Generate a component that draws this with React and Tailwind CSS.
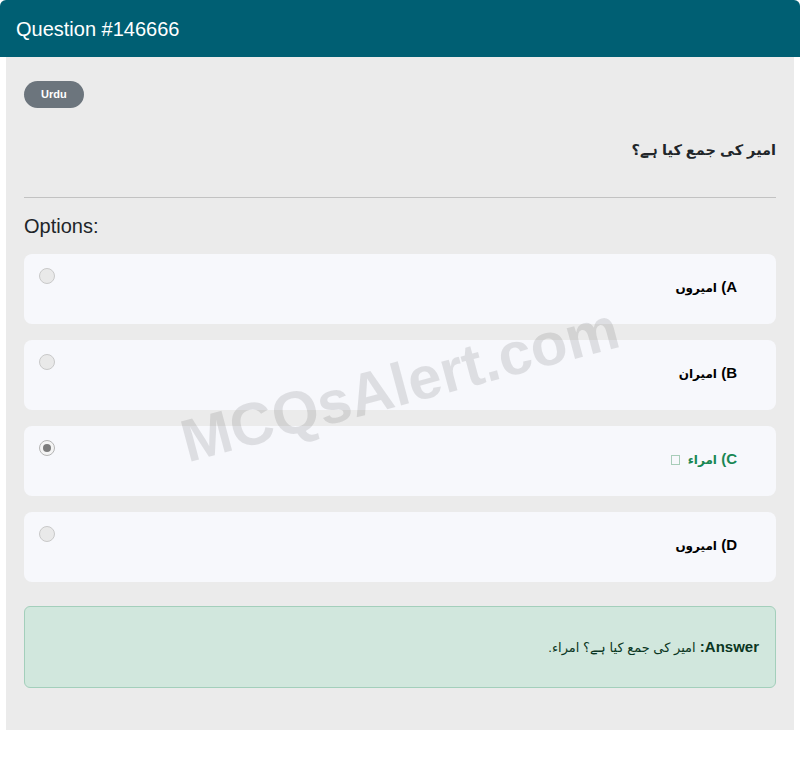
import React from "react";

const font = { fontFamily: '"Liberation Sans", Arial, "DejaVu Sans", sans-serif' };

function Radio({ checked }) {
  if (checked) {
    return (
      <span className="mt-[14px] ml-[15px] flex h-4 w-4 shrink-0 items-center justify-center self-start rounded-full border border-[#b5b5b5] bg-[#f4f4f4]">
        <span className="h-2 w-2 rounded-full bg-[#7c7c7c]" />
      </span>
    );
  }
  return (
    <span className="mt-[14px] ml-[15px] h-4 w-4 shrink-0 self-start rounded-full border border-[#c9c9c9] bg-[#e9e9e9]" />
  );
}

function Option({ letter, text, checked, correct }) {
  return (
    <div className="flex h-[70px] items-center rounded-lg bg-[#f7f8fc]">
      <Radio checked={checked} />
      <div
        dir="rtl"
        className={
          "flex-1 pr-[39px] pb-[3px] text-right text-[15px] font-bold " +
          (correct ? "text-[#198754]" : "text-black")
        }
      >
        {letter}) <span className="text-[12px]">{text}</span>
        {correct && (
          <span className="mr-[8px] inline-block h-[10px] w-[9px] border border-[#a8cdb9] align-middle" />
        )}
      </div>
    </div>
  );
}

export default function App() {
  return (
    <div className="min-h-[760px] w-[800px] bg-white" style={font}>
      <div className="flex h-[57px] items-center rounded-t-md bg-[#005f73] px-4 text-[20px] text-white">
        Question #146666
      </div>
      <div className="relative mx-[6px] bg-[#ebebeb] px-[18px] pt-[24px] pb-[42px]">
        <div className="flex">
          <span className="flex h-[27px] items-center rounded-full bg-[#6c757d] px-[17px] text-[11px] font-bold text-white">
            Urdu
          </span>
        </div>
        <div dir="rtl" className="mt-[28px] text-right text-[14.5px] leading-[28px] font-bold text-[#212529]">
          امیر کی جمع کیا ہے؟
        </div>
        <div className="mt-[33px] h-px bg-[#c2c2c2]" />
        <div className="mt-[14px] text-[20px] leading-[28px] text-[#212529]">Options:</div>
        <div className="mt-[14px] flex flex-col gap-4">
          <Option letter="A" text="اميروں" />
          <Option letter="B" text="اميران" />
          <Option letter="C" text="امراء" checked correct />
          <Option letter="D" text="اميروں" />
        </div>
        <div
          dir="rtl"
          className="mt-[24px] flex h-[82px] items-center rounded-md border border-[#a3cfbb] bg-[#d1e7dd] px-4 text-[15px] text-[#0a3622]"
        >
          <span>
            <b>Answer:</b> <span className="text-[13px]">امیر کی جمع کیا ہے؟ امراء.</span>
          </span>
        </div>
        <div className="pointer-events-none absolute left-[394px] top-[328px] -translate-x-1/2 -translate-y-1/2 -rotate-[15deg] whitespace-nowrap text-[60px] font-bold text-black/10">
          MCQsAlert.com
        </div>
      </div>
    </div>
  );
}
